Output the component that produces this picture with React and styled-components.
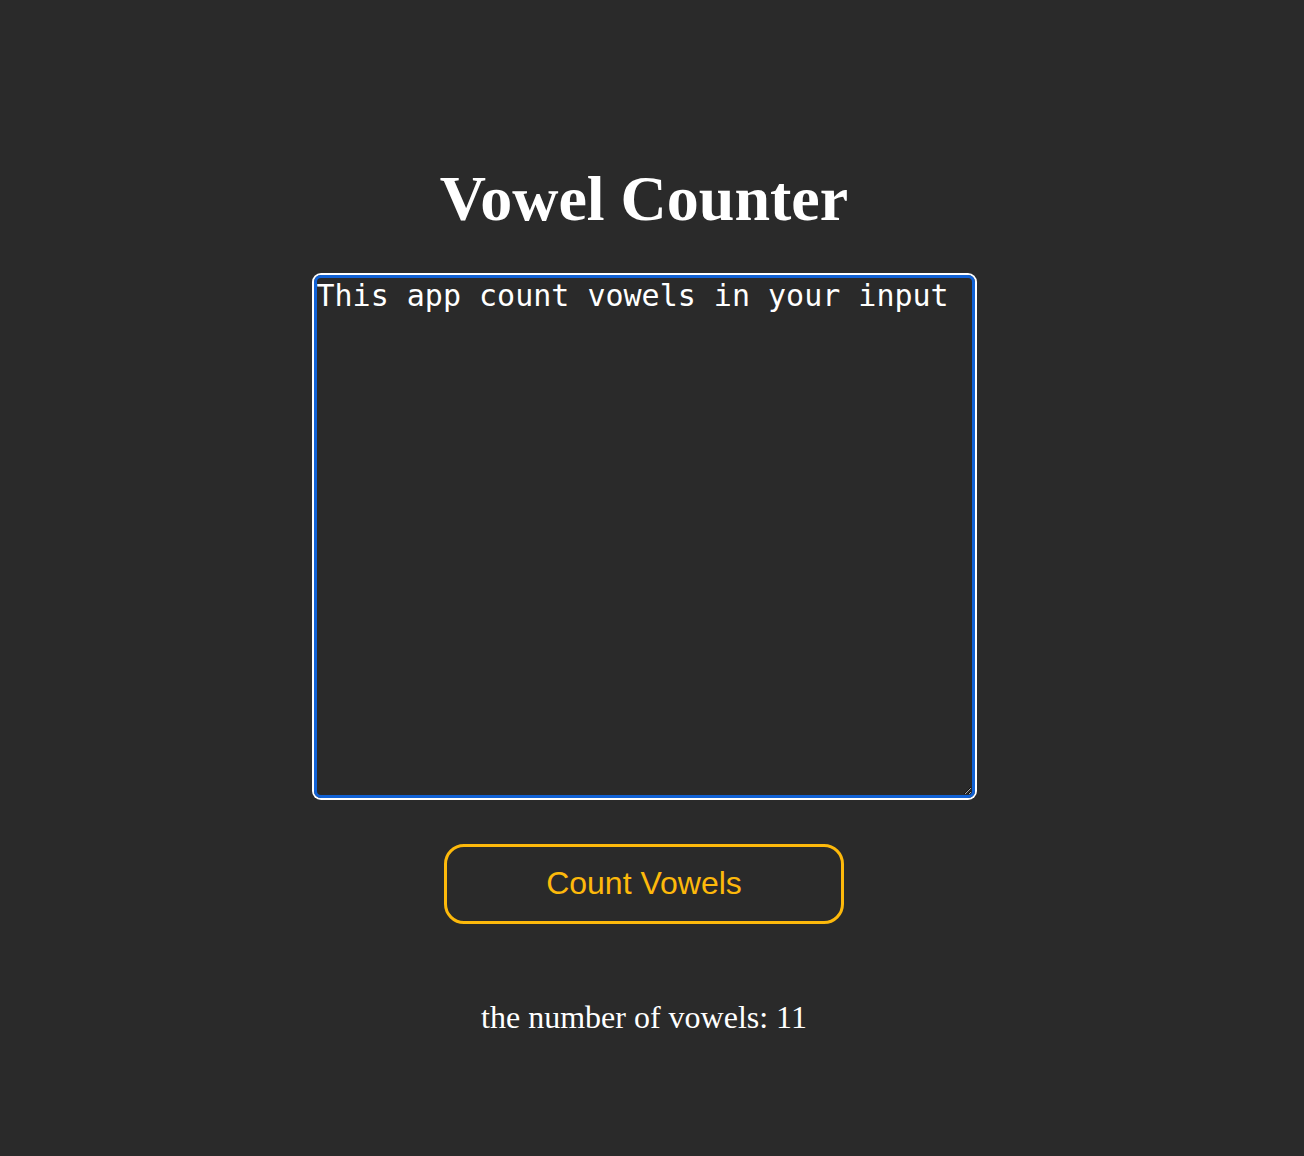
import styled, { createGlobalStyle } from 'styled-components';
import { useState } from 'react';

const GlobalStyle = createGlobalStyle`
  html, body {
    margin: 0;
    padding: 0;
    background: #2a2a2a;
  }
`

const StyledPage = styled.main`
  display: flex;
  flex-direction: column;
  align-items: center;
  padding: 162px 16px 100px 0;
  min-height: 100vh;
  box-sizing: border-box;
  background: #2a2a2a;
`

const StyledTitle = styled.h1`
  margin: 0;
  font-family: "Liberation Serif", "Times New Roman", serif;
  font-size: 64px;
  line-height: 1.15;
  font-weight: 700;
  color: #ffffff;
`

const StyledInput = styled.textarea`
  margin-top: 39px;
  width: 661px;
  height: 523px;
  box-sizing: border-box;
  padding: 0;
  background: transparent;
  color: #ffffff;
  font-family: "DejaVu Sans Mono", "Liberation Mono", monospace;
  font-size: 30px;
  border: 3px solid #1061d5;
  border-radius: 7px;
  box-shadow: 0 0 0 2px #ffffff;
  outline: none;
  color-scheme: dark;
`

const StyledButton = styled.button`
  margin-top: 46px;
  width: 400px;
  height: 80px;
  background: transparent;
  border: 3px solid #fdb90b;
  border-radius: 20px;
  color: #fdb90b;
  font-family: "Liberation Sans", Arial, sans-serif;
  font-size: 32px;
  cursor: pointer;
`

const StyledResult = styled.p`
  margin: 75px 0 0;
  font-family: "Liberation Serif", "Times New Roman", serif;
  font-size: 32px;
  line-height: 1.15;
  color: #ffffff;
`

const countVowels = (text) => (text.match(/[aeiou]/gi) || []).length;

const App = () => {
  const [text, setText] = useState('This app count vowels in your input');
  const [count, setCount] = useState(countVowels('This app count vowels in your input'));

  return (
    <>
      <GlobalStyle />
      <StyledPage>
        <StyledTitle>Vowel Counter</StyledTitle>
        <StyledInput value={text} onChange={(e) => setText(e.target.value)} spellCheck={false} />
        <StyledButton onClick={() => setCount(countVowels(text))}>Count Vowels</StyledButton>
        <StyledResult>the number of vowels: {count}</StyledResult>
      </StyledPage>
    </>
  );
}

export default App;
